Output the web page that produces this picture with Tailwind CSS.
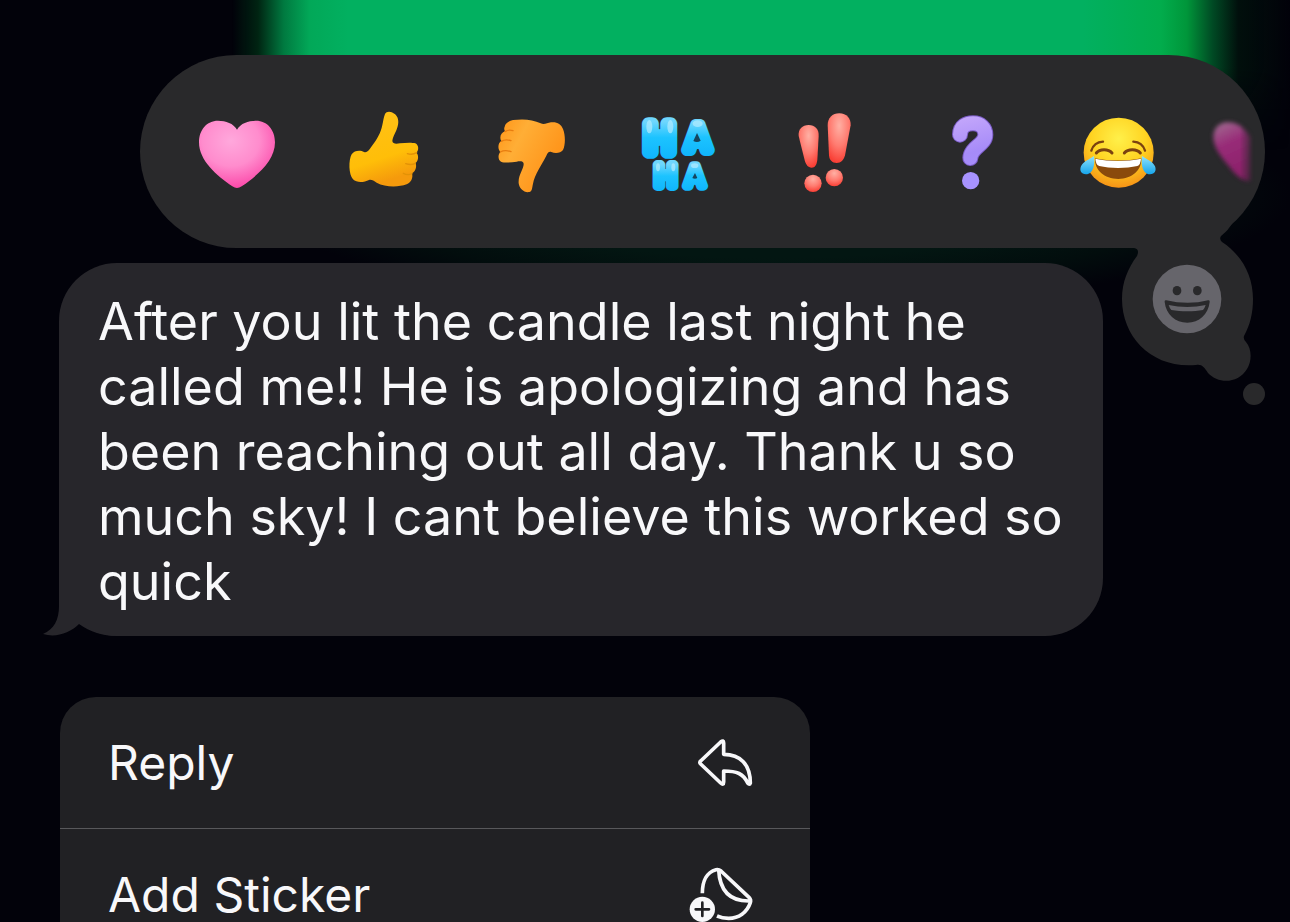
<!DOCTYPE html>
<html lang="en">
  <head>
    <meta charset="UTF-8" />
    <meta name="viewport" content="width=device-width, initial-scale=1.0" />
    <title>Messages</title>
    <script src="https://cdn.jsdelivr.net/npm/@tailwindcss/browser@4"></script>
  </head>
  <body class="bg-[#02020a] text-[#f8f8fa] font-['Inter','Liberation_Sans',sans-serif]">
    <main class="relative isolate h-screen overflow-hidden">
      <!-- Dimmed conversation behind the menu -->
      <div class="absolute inset-x-0 top-0 -z-10 h-[150px] bg-[linear-gradient(90deg,transparent_18%,#002412_20%,#007a40_22%,#02a858_24%,#02b060_27%,#02b060_84%,#02ac4c_90%,#00963a_92%,#004a24_94%,#010f0c_96%,transparent_100%)] mask-[linear-gradient(black_45%,transparent)]"></div>
      <div class="absolute right-0 left-[20%] top-20 -z-10 h-[230px] bg-[radial-gradient(closest-side,#031612_55%,#020d0d_80%,transparent)]"></div>

      <!-- Tapback picker -->
      <section class="relative mt-[55px] mr-[25px] ml-[140px]" aria-label="Reactions">
        <div class="flex h-[193px] items-center overflow-hidden rounded-full bg-[#29292b] pl-[23px]">
          <button type="button" aria-label="Heart" class="flex w-[147px] shrink-0 justify-center">
            <svg class="size-[100px]" viewBox="21 34 300 300">
              <defs>
                <radialGradient id="pink" cx=".42" cy=".3" r=".75">
                  <stop offset="0" stop-color="#ffa8dc" />
                  <stop offset=".5" stop-color="#ff8ccd" />
                  <stop offset="1" stop-color="#fb3fa4" />
                </radialGradient>
              </defs>
              <path fill="url(#pink)" d="M171 117C160 98 138 90 114 90C80 90 57 118 57 155C57 210 110 255 157 287Q171 297 185 287C232 255 285 210 285 155C285 118 262 90 228 90C204 90 182 98 171 117Z" />
            </svg>
          </button>
          <button type="button" aria-label="Thumbs up" class="flex w-[147px] shrink-0 justify-center">
            <svg class="size-[100px]" viewBox="462 34 300 300">
              <defs>
                <linearGradient id="yellow" x1="0" y1="0" x2=".3" y2="1">
                  <stop offset="0" stop-color="#ffc21a" />
                  <stop offset=".7" stop-color="#ffbe08" />
                  <stop offset="1" stop-color="#f59a0c" />
                </linearGradient>
              </defs>
              <path fill="url(#yellow)" d="M615 70C620 60 634 62 643 69C655 77 657 92 653 107C649 124 639 136 637 151C638 160 648 160 660 158C677 156 696 155 706 158C717 163 717 180 709 186C717 193 716 211 706 217C712 227 706 243 696 248C700 262 693 276 680 281C655 290 615 290 590 276C581 270 574 266 567 268C553 275 531 278 519 266C506 252 505 208 515 191C523 179 541 178 552 184C561 187 566 180 573 170C592 145 602 127 607 103C610 90 611 80 615 70Z" />
              <g fill="none" stroke="#e39206" stroke-width="4" stroke-linecap="round">
                <path d="M710 186C702 191 692 192 682 189" />
                <path d="M706 218C697 223 686 222 677 219" />
                <path d="M696 249C688 253 678 252 670 248" />
              </g>
            </svg>
          </button>
          <button type="button" aria-label="Thumbs down" class="flex w-[147px] shrink-0 justify-center">
            <svg class="size-[100px]" viewBox="4 34 300 300">
              <defs>
                <linearGradient id="orange" x1="0" y1="0" x2="1" y2=".6">
                  <stop offset="0" stop-color="#ff9417" />
                  <stop offset=".35" stop-color="#ffae36" />
                  <stop offset="1" stop-color="#ff8f14" />
                </linearGradient>
              </defs>
              <path fill="url(#orange)" d="M75 108C77 96 90 90 100 88C130 84 160 86 183 98C193 103 202 97 214 95C232 93 244 100 250 115C258 136 257 163 250 178C243 188 226 189 215 184C207 182 204 187 200 195C186 224 165 250 160 279C157 292 158 302 149 304C134 307 119 295 117 278C115 252 133 235 132 219C131 211 121 211 111 213C94 216 74 217 64 213C55 209 54 192 62 184C53 174 55 156 65 151C58 140 64 126 76 122C73 117 73 113 75 108Z" />
              <g fill="none" stroke="#e87d10" stroke-width="4" stroke-linecap="round">
                <path d="M76 123C83 118 92 117 100 120" />
                <path d="M65 152C73 147 84 147 94 150" />
                <path d="M62 184C71 179 83 179 94 183" />
              </g>
            </svg>
          </button>
          <button type="button" aria-label="Haha" class="flex w-[147px] shrink-0 justify-center">
            <svg class="size-[100px]" viewBox="445 34 300 300" text-anchor="middle" stroke-linejoin="round" aria-hidden="true">
              <defs>
                <linearGradient id="blue" x1="0" y1="0" x2="0" y2="1">
                  <stop offset=".15" stop-color="#6fd6fd" />
                  <stop offset=".5" stop-color="#1cc3ff" />
                  <stop offset="1" stop-color="#0fb4fb" />
                </linearGradient>
              </defs>
              <g fill="url(#blue)" stroke="url(#blue)">
                <text x="540" y="183" font-size="116" stroke-width="40">H</text>
                <text x="655" y="177" font-size="102" stroke-width="36">A</text>
                <text x="558" y="286" font-size="84" stroke-width="30">H</text>
                <text x="646" y="285" font-size="80" stroke-width="28">A</text>
              </g>
              <g fill="#16455e">
                <path d="M652 127L663 150Q653 157 641 151Z" />
                <path d="M646 247L653 262Q646 266 638 262Z" />
              </g>
              <g fill="#b4ecff" opacity=".7">
                <ellipse cx="509" cy="108" rx="9" ry="20" />
                <ellipse cx="572" cy="108" rx="9" ry="20" />
                <ellipse cx="654" cy="99" rx="15" ry="10" />
                <ellipse cx="535" cy="230" rx="6" ry="12" />
                <ellipse cx="581" cy="230" rx="6" ry="12" />
                <ellipse cx="645" cy="225" rx="11" ry="7" />
              </g>
            </svg>
          </button>
          <button type="button" aria-label="Emphasize" class="flex w-[147px] shrink-0 justify-center">
            <svg class="size-[100px]" viewBox="-14 34 300 300">
              <defs>
                <radialGradient id="red" cx=".5" cy=".25" r=".75">
                  <stop offset="0" stop-color="#ffb0a4" />
                  <stop offset=".55" stop-color="#ff7b70" />
                  <stop offset="1" stop-color="#f93f35" />
                </radialGradient>
              </defs>
              <g fill="url(#red)">
                <path d="M57 136C55 115 68 103 87 103C106 103 118 115 117 136L113 208C111 224 105 231 96 231C85 231 79 223 75 209Z" />
                <path d="M144 103C144 82 158 68 179 68C201 68 214 83 213 104L196 194C192 209 184 217 171 217C157 217 149 208 148 194Z" />
                <circle cx="100" cy="278" r="26" />
                <circle cx="164" cy="261" r="26" />
              </g>
            </svg>
          </button>
          <button type="button" aria-label="Question" class="flex w-[147px] shrink-0 justify-center">
            <svg class="size-[100px]" viewBox="427 34 300 300" fill="none" stroke-linecap="round" stroke-linejoin="round">
              <defs>
                <linearGradient id="violet" gradientUnits="userSpaceOnUse" x1="540" y1="75" x2="600" y2="300">
                  <stop offset="0" stop-color="#c5a8fb" />
                  <stop offset=".5" stop-color="#a68bf8" />
                  <stop offset="1" stop-color="#a893ff" />
                </linearGradient>
              </defs>
              <path stroke="#7a5cc4" stroke-width="48" d="M541 132C542 106 560 98 580 98C603 98 617 112 617 132C617 163 574 168 572 202" />
              <path stroke="url(#violet)" stroke-width="42" d="M541 132C542 106 560 98 580 98C603 98 617 112 617 132C617 163 574 168 572 202" />
              <circle cx="573" cy="270" r="26" fill="#a893ff" />
            </svg>
          </button>
          <button type="button" aria-label="Tears of joy" class="flex w-[147px] shrink-0 justify-center">
            <svg class="size-[100px]" viewBox="29 34 300 300">
              <defs>
                <radialGradient id="face" cx=".5" cy=".3" r=".72">
                  <stop offset="0" stop-color="#fff04a" />
                  <stop offset=".55" stop-color="#ffd321" />
                  <stop offset="1" stop-color="#f58f16" />
                </radialGradient>
                <linearGradient id="tear" x1="0" y1="0" x2="0" y2="1">
                  <stop offset="0" stop-color="#8fe3fb" />
                  <stop offset="1" stop-color="#16a5ec" />
                </linearGradient>
              </defs>
              <circle cx="178" cy="186" r="105" fill="url(#face)" />
              <path fill="#8a4a0c" d="M107 203C150 212 202 212 246 203C248 238 218 265 177 265C135 265 105 238 107 203Z" />
              <path fill="#fff" d="M108 204C150 213 202 213 245 204Q244 222 234 226C200 234 152 234 120 226Q109 222 108 204Z" />
              <g fill="none" stroke="#7b4210" stroke-linecap="round">
                <path stroke-width="9" d="M111 187C121 174 147 174 158 187M195 187C206 174 232 174 243 187" />
                <path stroke-width="7" d="M96 180C101 164 113 154 131 153M222 153C240 154 252 164 257 180" />
              </g>
              <path fill="url(#tear)" d="M104 196C107 219 103 251 80 251C65 251 60 239 65 227C71 213 88 207 104 196Z" />
              <path fill="url(#tear)" d="M248 196C245 219 249 251 272 251C287 251 292 239 287 227C281 213 264 207 248 196Z" />
            </svg>
          </button>
          <!-- Next reaction, fading out at the edge -->
          <button type="button" aria-label="More reactions" class="flex w-[147px] shrink-0 justify-center">
            <svg class="size-[100px] overflow-visible" viewBox="469 34 300 300">
              <defs>
                <linearGradient id="dusk" x1=".3" y1="0" x2=".6" y2="1">
                  <stop offset="0" stop-color="#a0648e" />
                  <stop offset=".35" stop-color="#982c78" />
                  <stop offset="1" stop-color="#8a1f68" />
                </linearGradient>
                <linearGradient id="fade" gradientUnits="userSpaceOnUse" x1="540" y1="0" x2="590" y2="0">
                  <stop offset="0" stop-color="#fff" />
                  <stop offset="1" stop-color="#000" />
                </linearGradient>
                <mask id="edge" maskUnits="userSpaceOnUse" x="440" y="70" width="200" height="230">
                  <rect x="440" y="70" width="200" height="230" fill="url(#fade)" />
                </mask>
                <filter id="soft" x="-20%" y="-20%" width="140%" height="140%"><feGaussianBlur stdDeviation="6" /></filter>
              </defs>
              <g mask="url(#edge)">
                <path filter="url(#soft)" fill="url(#dusk)" d="M503 95C533 94 552 110 575 140V270C555 274 532 260 508 227C480 195 462 168 461 140C461 112 478 96 503 95Z" />
              </g>
            </svg>
          </button>
        </div>

        <!-- Thought bubble with the emoji button -->
        <svg class="absolute -right-3 top-[165px] h-[195px] w-[165px]" viewBox="1112 220 165 195" fill="#29292b" aria-hidden="true">
          <path d="M1128 220H1234C1230 228 1225 233 1221 236Q1219 239 1222 242C1242 255 1253 276 1253 299C1253 313 1250 325 1244 336Q1243 339 1246 342C1252 349 1252 361 1247 369C1238 384 1218 384 1208 373C1204 367 1202 364 1196 365C1153 369 1122 338 1122 299C1122 282 1128 268 1137 256Q1140 249 1134 248H1128Z" />
          <circle cx="1254" cy="394" r="11" />
        </svg>
        <button type="button" aria-label="Choose emoji" class="absolute right-[43px] top-[209px]">
          <svg class="size-[70px]" viewBox="0 0 210 210">
            <circle cx="105" cy="105" r="103" fill="#66656b" />
            <g fill="#29292b">
              <ellipse cx="75" cy="80" rx="13" ry="14" />
              <ellipse cx="136" cy="80" rx="13" ry="14" />
              <path d="M38 114Q37 107 43 109C85 119 130 119 168 109Q174 107 173 114C169 152 141 176 106 176C70 176 42 152 38 114Z" />
            </g>
            <path fill="#66656b" d="M50 123C86 131 126 131 161 123Q158 133 153 138C125 143 87 143 58 138Q53 133 50 123Z" />
          </svg>
        </button>
      </section>

      <!-- Message -->
      <article class="relative mt-[15px] mr-[187px] ml-[59px] rounded-[58px] bg-[#27262b] pt-[26px] pr-9 pb-[22px] pl-[39px]">
        <svg class="absolute bottom-0 -left-4 h-[60px] w-[80px]" viewBox="43 576 80 60" fill="#27262b" aria-hidden="true">
          <path d="M59 576V606C59 620 54 629 43 634C56 638 70 633 79 624C90 632 103 636 117 636H123V576Z" />
        </svg>
        <p class="relative text-[52px] leading-[65px]">After you lit the candle last night he called me!! He is apologizing and has been reaching out all day. Thank u so much sky! I cant believe this worked so quick</p>
      </article>

      <!-- Context menu -->
      <nav class="mt-[61px] ml-[60px] w-[750px] divide-y divide-[#58585b] overflow-hidden rounded-[36px] bg-[#212124] text-[48px] leading-[60px]">
        <button type="button" class="flex h-[132px] w-full items-center justify-between pr-14 pl-12">
          <span>Reply</span>
          <svg class="h-[50px] w-[57px]" viewBox="80 55 171 150" fill="none" stroke="currentColor" stroke-width="11" stroke-linejoin="round" aria-hidden="true">
            <path d="M91 124L151 67Q160 60 160 70V104C210 104 240 134 240 190Q238 197 232 190C219 162 200 154 160 154V187Q160 198 151 190L91 133Q86 128 91 124Z" />
          </svg>
        </button>
        <button type="button" class="flex h-[132px] w-full items-center justify-between pr-14 pl-12">
          <span>Add Sticker</span>
          <svg class="h-[60px] w-[66px]" viewBox="53 440 198 180" fill="none" stroke="currentColor" stroke-width="11" stroke-linejoin="round" aria-hidden="true">
            <path d="M96 525C96 488 110 461 137 454Q145 452 152 458L236 537Q243 544 240 553C230 583 205 600 175 600C162 600 151 598 140 593" />
            <path d="M145 454C148 518 180 550 240 548" />
            <circle cx="96" cy="573" r="38" fill="currentColor" stroke="none" />
            <path stroke="#212124" stroke-width="8" stroke-linecap="round" d="M76 573H116M96 553V593" />
          </svg>
        </button>
      </nav>
    </main>
  </body>
</html>
